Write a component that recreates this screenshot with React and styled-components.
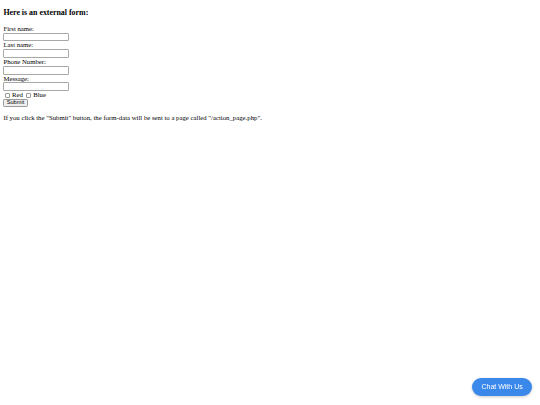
import React from "react";
import styled, { createGlobalStyle } from "styled-components";

const GlobalStyle = createGlobalStyle`
  html, body {
    height: 100%;
  }
  body {
    margin: 0;
    padding: 0 3.4px 3.4px;
    box-sizing: border-box;
    font-family: "Liberation Serif", "Times New Roman", serif;
    font-size: 6.75px;
    line-height: 1.15;
    color: #000;
    background: #fff;
  }
`;

const Page = styled.main`
  display: flex;
  flex-direction: column;
  align-items: flex-start;
`;

const Heading = styled.h3`
  font-size: 7.9px;
  font-weight: bold;
  line-height: 1.15;
  margin: 7.9px 0;
`;

const Form = styled.form`
  display: flex;
  flex-direction: column;
  align-items: flex-start;
  margin: 0;
`;

const Label = styled.label`
  display: block;
  height: 7.76px;
`;

const TextInput = styled.input.attrs({ type: "text" })`
  display: block;
  box-sizing: border-box;
  width: 66px;
  height: 8.8px;
  margin: 0;
  padding: 0 1px;
  border: 1px solid #a8a8a8;
  border-radius: 1px;
  background: #fff;
  font-family: "Liberation Sans", Arial, sans-serif;
  font-size: 5.6px;
`;

const CheckRow = styled.div`
  display: flex;
  align-items: center;
  height: 8.2px;
`;

const Check = styled.input.attrs({ type: "checkbox" })`
  box-sizing: border-box;
  width: 5.2px;
  height: 5.2px;
  margin: 0 2px 0 1.5px;
  appearance: none;
  border: 0.8px solid #9a9a9a;
  border-radius: 1px;
  background: #fff;
`;

const CheckText = styled.span`
  margin-right: 1.5px;
`;

const SubmitButton = styled.input.attrs({ type: "submit" })`
  box-sizing: border-box;
  height: 7.6px;
  margin: 0;
  padding: 0 2.4px;
  border: 0.8px solid #9a9a9a;
  border-radius: 1.2px;
  background: #efefef;
  color: #000;
  font-family: "Liberation Sans", Arial, sans-serif;
  font-size: 5.6px;
  line-height: 1;
`;

const Note = styled.p`
  margin: 6.75px 0;
`;

const ChatButton = styled.button`
  position: fixed;
  right: 8px;
  bottom: 9px;
  padding: 5px 9.3px;
  border: none;
  border-radius: 10px;
  background: #3b88eb;
  color: #fff;
  font-family: "Liberation Sans", Arial, sans-serif;
  font-size: 7px;
  line-height: 1.15;
  box-shadow: 0 1px 3px rgba(0, 0, 0, 0.2);
  cursor: pointer;
`;

const fields = ["First name:", "Last name:", "Phone Number:", "Message:"];

export default function App() {
  return (
    <Page>
      <GlobalStyle />
      <Heading>Here is an external form:</Heading>
      <Form onSubmit={(e) => e.preventDefault()}>
        {fields.map((f) => (
          <React.Fragment key={f}>
            <Label>{f}</Label>
            <TextInput />
          </React.Fragment>
        ))}
        <CheckRow>
          <Check />
          <CheckText>Red</CheckText>
          <Check />
          <CheckText>Blue</CheckText>
        </CheckRow>
        <SubmitButton value="Submit" />
      </Form>
      <Note>
        If you click the "Submit" button, the form-data will be sent to a page
        called "/action_page.php".
      </Note>
      <ChatButton>Chat With Us</ChatButton>
    </Page>
  );
}
